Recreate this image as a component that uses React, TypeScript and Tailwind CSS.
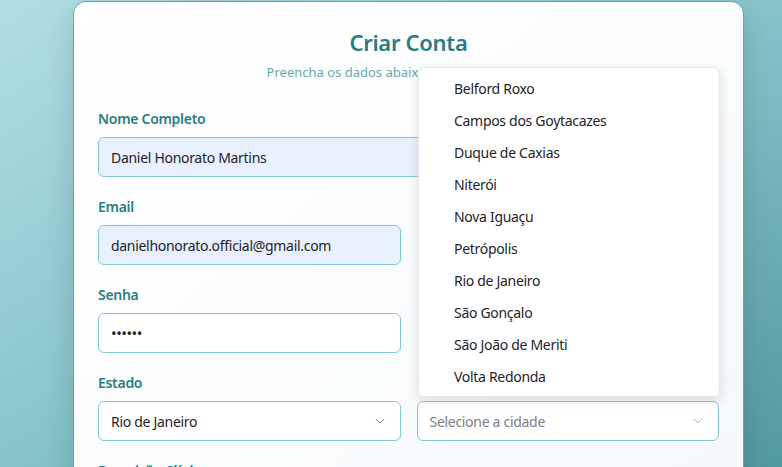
import { ChevronDown } from "lucide-react";

const cidades = [
  "Belford Roxo",
  "Campos dos Goytacazes",
  "Duque de Caxias",
  "Niterói",
  "Nova Iguaçu",
  "Petrópolis",
  "Rio de Janeiro",
  "São Gonçalo",
  "São João de Meriti",
  "Volta Redonda",
];

function Label({ children }: { children?: React.ReactNode }) {
  return (
    <label className="block mb-2 h-5 leading-5 text-[14px] font-semibold text-[#2b7d82]">
      {children}
    </label>
  );
}

export default function App() {
  return (
    <div
      className="w-full h-[467px] overflow-hidden bg-linear-to-br from-[#b2dee2] via-[#86c4ca] to-[#5199a0] tracking-[-0.3px]"
      style={{ fontFamily: '"Noto Sans", "Open Sans", sans-serif' }}
    >
      <div className="ml-[73px] mt-[1px] w-[671px] relative rounded-t-[13px] border border-[#6aa3a8] bg-linear-to-br from-white to-[#f4f8fb] shadow-[0_10px_30px_rgba(0,0,0,0.15)] px-6 pt-6 pb-10">
        {/* Header */}
        <div className="text-center mb-[27px]">
          <h1 className="text-[22px] leading-8 font-semibold text-[#2a7c80]">
            Criar Conta
          </h1>
          <p className="mt-1 text-[13px] leading-5 tracking-normal text-[#6aa9ac]">
            Preencha os dados abaixo para criar sua conta
          </p>
        </div>

        {/* Form */}
        <div className="grid grid-cols-2 gap-x-4 gap-y-5">
          <div className="col-span-2">
            <Label>Nome Completo</Label>
            <div className="h-10 flex items-center px-3 rounded-md border border-[#82c8d0] bg-[#e8f0fe] text-[14px] text-[#1f2328]">
              Daniel Honorato Martins
            </div>
          </div>

          <div>
            <Label>Email</Label>
            <div className="h-10 flex items-center px-3 rounded-md border border-[#82c8d0] bg-[#e8f0fe] text-[14px] text-[#1f2328]">
              danielhonorato.official@gmail.com
            </div>
          </div>
          <div />

          <div>
            <Label>Senha</Label>
            <div className="h-10 flex items-center px-3 rounded-md border border-[#82c8d0] bg-white text-[15px] text-[#1f2328] tracking-[-0.5px]">
              ••••••
            </div>
          </div>
          <div />

          <div>
            <Label>Estado</Label>
            <div className="h-10 flex items-center justify-between px-3 rounded-md border border-[#82c8d0] bg-white text-[14px] text-[#1f2328]">
              <span>Rio de Janeiro</span>
              <ChevronDown className="w-4 h-4 text-[#7a7f85]" strokeWidth={1.5} />
            </div>
          </div>
          <div>
            <Label />
            <div className="h-10 flex items-center justify-between px-3 rounded-md border border-[#82c8d0] bg-white text-[14px] text-[#7b7f84]">
              <span>Selecione a cidade</span>
              <ChevronDown className="w-4 h-4 text-[#b3b7bb]" strokeWidth={1.5} />
            </div>
          </div>

          <div className="col-span-2">
            <Label>Descrição Clínica</Label>
          </div>
        </div>

        {/* City dropdown */}
        <div className="absolute left-[344px] top-[65px] w-[302px] rounded-md border border-[#e6e8ea] bg-white shadow-[0_4px_12px_rgba(0,0,0,0.12)] py-1">
          {cidades.map((c) => (
            <div
              key={c}
              className="h-8 flex items-center pl-[35px] text-[14px] text-[#1f2328]"
            >
              {c}
            </div>
          ))}
        </div>
      </div>
    </div>
  );
}
